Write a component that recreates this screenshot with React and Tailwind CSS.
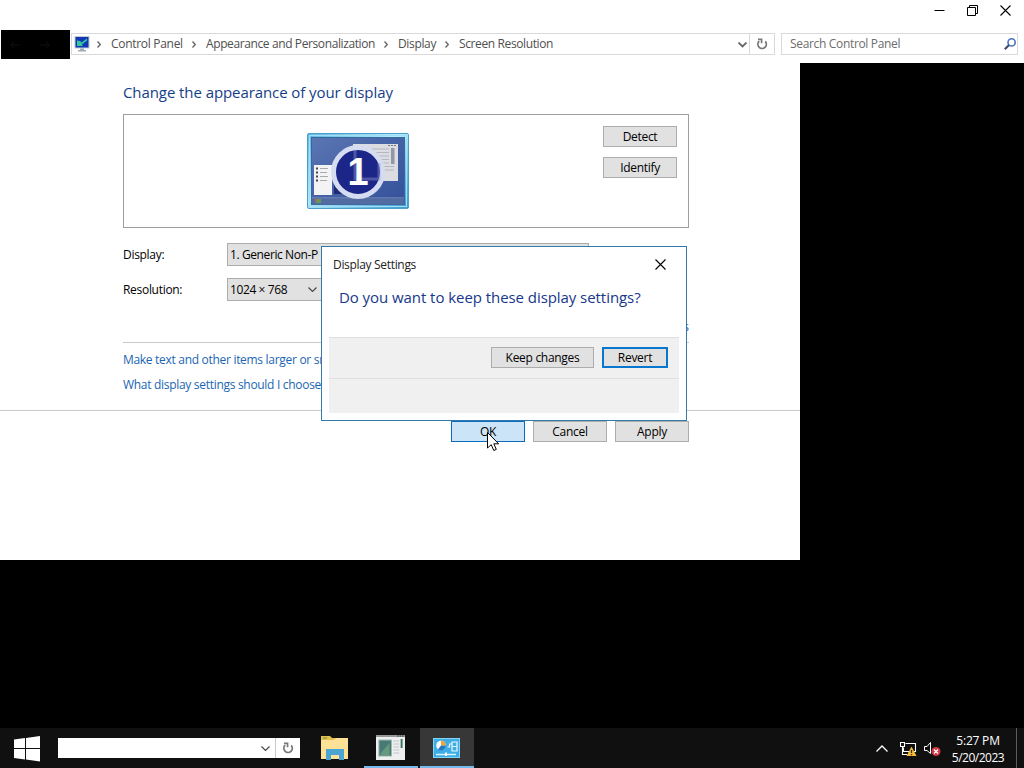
import React from 'react'

const crumbs = [
    { label: 'Control Panel', width: 'w-[95px]', tracking: 'tracking-[-0.3px]' },
    { label: 'Appearance and Personalization', width: 'w-[192px]', tracking: 'tracking-[-0.39px]' },
    { label: 'Display', width: 'w-[61px]', tracking: 'tracking-[-0.35px]' },
    { label: 'Screen Resolution', width: 'w-[100px]', tracking: 'tracking-[-0.38px]' },
]

function Chevron({ className, d = 'M0.5 0.5 L4.5 4.5 L8.5 0.5', box = '0 0 9 5', stroke = '#666', strokeWidth = 1.3 }) {
    return (
        <svg className={className} viewBox={box} fill="none" stroke={stroke} strokeWidth={strokeWidth}>
            <path d={d} />
        </svg>
    )
}

function RefreshIcon() {
    return (
        <svg className="w-3 h-3" viewBox="0 0 12 12" fill="none" stroke="#777" strokeWidth="1.8">
            <path d="M9.2 3.4 A4.2 4.2 0 1 1 3.2 3.2" />
            <path d="M2 1.4 H5.6 V5.2" strokeWidth="1.6" />
        </svg>
    )
}

function CloseIcon() {
    return (
        <svg className="w-[11px] h-[11px]" viewBox="0 0 11 11" stroke="#000" strokeWidth="1.1">
            <path d="M0.5 0.5 L10.5 10.5 M10.5 0.5 L0.5 10.5" />
        </svg>
    )
}

function PushButton({ children, className = 'w-[74px] border border-[#adadad] bg-[#e1e1e1]' }) {
    return (
        <button className={`h-[21px] flex items-center justify-center tracking-[-0.3px] shrink-0 ${className}`}>
            {children}
        </button>
    )
}

function TitleBar() {
    return (
        <div className="h-[30px] flex justify-end pt-[5px] pr-[13px] gap-[22px]">
            <svg className="w-[11px] h-[11px]" viewBox="0 0 11 11" stroke="#000"><path d="M0.5 5.5 H10.5" /></svg>
            <svg className="w-[11px] h-[11px]" viewBox="0 0 11 11" fill="none" stroke="#000">
                <path d="M0.5 2.5 H8.5 V10.5 H0.5 Z M2.5 2.5 V0.5 H10.5 V8.5 H8.5" />
            </svg>
            <CloseIcon />
        </div>
    )
}

function AddressBar() {
    return (
        <div className="h-[33px] flex items-start text-[#4f4f4f]">
            <div className="ml-px w-[69px] h-[29px] bg-black flex items-center pl-[9px] gap-[20px]">
                <svg className="w-[10px] h-[8px]" viewBox="0 0 10 8" fill="none" stroke="#101010"><path d="M4 0.5 L1 4 L4 7.5 M1 4 H10" /></svg>
                <svg className="w-[10px] h-[8px]" viewBox="0 0 10 8" fill="none" stroke="#101010"><path d="M6 0.5 L9 4 L6 7.5 M9 4 H0" /></svg>
            </div>
            <div className="mt-[3px] ml-px w-[704px] h-[22px] border border-[#d9d9d9] flex items-center">
                <svg className="w-4 h-4 ml-[2px] shrink-0" viewBox="0 0 16 16">
                    <path d="M0.5 0 H15.5 V12.5 H0.5 Z" fill="#c5cad4" />
                    <path d="M1.5 1 H14.5 V11.5 H1.5 Z" fill="#1239b4" />
                    <path d="M6 12.5 H10 V14 H12 V15.5 H4 V14 H6 Z" fill="#a3a9b3" />
                    <path d="M13 2.5 L7.5 6.5 L6 5 L3 4.5 V10 H9 L7.8 8.4 L13 4.5 Z" fill="#35c79a" />
                </svg>
                <div className="flex ml-[7px]">
                    {crumbs.map((crumb) => (
                        <div key={crumb.label} className={`flex items-center shrink-0 ${crumb.width}`}>
                            <Chevron className="w-[4px] h-[7px] mr-[10px] shrink-0" box="0 0 4 7" d="M0.5 0.5 L3.3 3.5 L0.5 6.5" strokeWidth={1.4} />
                            <span className={`whitespace-nowrap ${crumb.tracking}`}>{crumb.label}</span>
                        </div>
                    ))}
                </div>
                <Chevron className="w-[9px] h-[6px] ml-auto mr-[2px] shrink-0 mt-[2px]" box="0 0 9 6" strokeWidth={1.8} />
                <div className="w-[25px] h-full border-l border-[#d9d9d9] flex items-center justify-center">
                    <RefreshIcon />
                </div>
            </div>
            <div className="mt-[3px] ml-[6px] w-[237px] h-[22px] border border-[#d9d9d9] flex items-center pl-[8px] text-[#6d6d6d]">
                <span className="tracking-[-0.33px]">Search Control Panel</span>
                <svg className="w-[12px] h-[12px] ml-auto mr-px" viewBox="0 0 12 12" fill="none">
                    <circle cx="7.6" cy="4.4" r="3.6" stroke="#4672bd" strokeWidth="1.6" />
                    <path d="M5 7 L0.8 11.2" stroke="#3a4d6d" strokeWidth="2" />
                </svg>
            </div>
        </div>
    )
}

function MonitorPreview() {
    return (
        <svg className="w-[102px] h-[76px]" viewBox="0 0 102 76">
            <defs>
                <linearGradient id="frame" x1="0" y1="0" x2="1" y2="1">
                    <stop offset="0" stopColor="#5fb6e0" />
                    <stop offset="0.45" stopColor="#b5ebfb" />
                    <stop offset="1" stopColor="#3c9bd2" />
                </linearGradient>
                <linearGradient id="desktop" x1="0" y1="0" x2="1" y2="1">
                    <stop offset="0" stopColor="#5b76b2" />
                    <stop offset="0.5" stopColor="#4562a6" />
                    <stop offset="1" stopColor="#35509a" />
                </linearGradient>
            </defs>
            <rect x="0.5" y="0.5" width="101" height="75" rx="1.5" fill="url(#frame)" stroke="#4b9fca" />
            <rect x="2.5" y="2.5" width="97" height="71" fill="none" stroke="#9edff6" />
            <rect x="4.5" y="4.5" width="93" height="67" fill="url(#desktop)" stroke="#36699f" />
            <rect x="46" y="11" width="45" height="37" fill="#dcdde2" />
            <path d="M65 16 H82 M65 19.5 H82 M65 23 H82 M65 26.5 H82 M65 30 H82 M65 33.5 H87 M65 37 H87" stroke="#b4b7bd" />
            <rect x="84" y="15" width="3.5" height="16" fill="#9298a3" />
            <path d="M81 12.5 H90" stroke="#777" strokeDasharray="2 1" />
            <rect x="27" y="32" width="9" height="29" fill="#1d2c75" />
            <rect x="7" y="32" width="18" height="30" fill="#f3f3f5" />
            <path d="M9 35.5 H11 M9 39.5 H11 M9 43.5 H11 M9 47.5 H11" stroke="#43464d" strokeWidth="1.8" />
            <path d="M13 35.5 H21 M13 39.5 H20 M13 43.5 H21 M13 47.5 H20" stroke="#aaa" />
            <path d="M5 65 H97" stroke="#8498c2" />
            <rect x="5" y="65.5" width="92" height="6" fill="#526ba1" />
            <path d="M8 66 H11 V68 H8 Z" fill="#b66b4e" />
            <path d="M11 66 H14 V70 H9 V68 H11 Z" fill="#5f9c5a" />
            <circle cx="51" cy="39" r="24.5" fill="#1c2689" stroke="#d5dcf2" strokeWidth="5" />
            <path d="M48 17 V46 H72 V30" fill="none" stroke="#8b93c7" strokeWidth="3" opacity="0.45" />
            <text x="51" y="52" textAnchor="middle" fill="#fff" fontFamily="Liberation Sans, sans-serif" fontWeight="700" fontSize="38">1</text>
        </svg>
    )
}

function SettingRow({ label, value, width }) {
    return (
        <div className="flex items-center h-[23px]">
            <span className="w-[104px] tracking-[-0.3px]">{label}</span>
            <div className={`h-[23px] bg-[#e1e1e1] border border-[#adadad] flex items-center justify-between pl-[2px] pr-[6px] ${width}`}>
                <span className="tracking-[-0.4px]">{value}</span>
                <Chevron className="w-[9px] h-[5px]" stroke="#444" strokeWidth={1.1} />
            </div>
        </div>
    )
}

function DisplayPanel() {
    return (
        <div className="w-[800px] h-[497px] bg-white">
            <div className="h-[347px] pl-[123px] pt-[17px]">
                <h1 className="h-[34px] text-[15px] leading-6 text-[#153e89] tracking-[-0.08px]">Change the appearance of your display</h1>
                <div className="w-[566px] h-[114px] border border-[#9e9e9e] flex">
                    <div className="flex-1 pl-[183px] pt-[18px]"><MonitorPreview /></div>
                    <div className="flex flex-col gap-[10px] pt-[11px] pr-[11px]">
                        <PushButton>Detect</PushButton>
                        <PushButton>Identify</PushButton>
                    </div>
                </div>
                <div className="pt-[15px] flex flex-col gap-[12px]">
                    <SettingRow label="Display:" value="1. Generic Non-P" width="w-[362px]" />
                    <SettingRow label="Resolution:" value="1024 × 768" width="w-[97px]" />
                </div>
                <div className="w-[566px] h-[42px] border-b border-[#c9c9c9] flex justify-end items-end pb-[7px] text-[#1a66b3]">Advanced settings</div>
                <div className="pt-[8px] flex flex-col gap-[7px] text-[#1a66b3] leading-[18px] tracking-[-0.3px]">
                    <span>Make text and other items larger or smaller</span>
                    <span>What display settings should I choose?</span>
                </div>
            </div>
            <div className="w-[800px] border-t border-[#c9c9c9] pt-[10px] flex pl-[451px] gap-[8px]">
                <PushButton className="w-[74px] border border-[#0b6cbd] bg-[#cce4f7]">OK</PushButton>
                <PushButton>Cancel</PushButton>
                <PushButton>Apply</PushButton>
            </div>
        </div>
    )
}

function KeepDialog() {
    return (
        <div className="absolute left-[321px] top-[246px] w-[366px] h-[175px] bg-white border border-[#3379ac] px-[7px]">
            <div className="h-[34px] flex items-center justify-between pl-[4px] pr-[13px] pt-[1px] text-[#222]">
                <span className="tracking-[-0.32px]">Display Settings</span>
                <CloseIcon />
            </div>
            <p className="h-[56px] pl-[10px] pt-[4px] text-[15px] leading-6 text-[#16378b] tracking-[-0.06px]">Do you want to keep these display settings?</p>
            <div className="w-[350px] h-[41px] bg-[#f0f0f0] border-t border-[#dfdfdf] flex justify-end gap-[8px] pt-[9px] pr-[11px]">
                <PushButton className="w-[103px] border border-[#adadad] bg-[#e1e1e1]">Keep changes</PushButton>
                <PushButton className="w-[66px] border-2 border-[#0877d0] bg-[#e1e1e1]">Revert</PushButton>
            </div>
            <div className="w-[350px] h-[35px] bg-[#f0f0f0] border-t border-[#dfdfdf]" />
        </div>
    )
}

function Taskbar() {
    return (
        <div className="mt-auto h-10 bg-[#101010] flex items-center text-white">
            <svg className="ml-[14px] mt-[2px] w-[26px] h-[26px]" viewBox="0 0 26 26" fill="#fff">
                <path d="M0 3.6 L11 2.1 V12 H0 Z M12 2 L26 0 V12 H12 Z M0 13 H11 V23.4 L0 22 Z M12 13 H26 V25.5 L12 23.5 Z" />
            </svg>
            <div className="ml-[18px] w-[242px] h-[20px] bg-white flex items-center justify-end">
                <Chevron className="w-[9px] h-[5px] mr-[5px] mt-px" stroke="#444" strokeWidth={1.1} />
                <div className="w-[25px] h-full border-l border-[#ccc] flex items-center justify-center"><RefreshIcon /></div>
            </div>
            <svg className="ml-[21px] w-[28px] h-[24px]" viewBox="0 0 28 24">
                <path d="M0 0 H9 L11 2 H23 V5 H0 Z" fill="#e3c04d" />
                <path d="M0 4 H13 L15 2 H27 V23 H0 Z" fill="#fce197" />
                <path d="M2 2 H6" stroke="#5f9356" />
                <path d="M5 13 H23 V24 H18 V19 H10 V24 H5 Z" fill="#4aa5d3" />
            </svg>
            <div className="ml-[15px] w-[54px] h-10 border-b-2 border-[#76b9ed] flex items-center justify-center">
                <svg className="w-[29px] h-[25px] mr-px" viewBox="0 0 30 25" preserveAspectRatio="none">
                    <rect width="30" height="25" fill="#eef0f0" />
                    <path d="M0 1 H30" stroke="#96999c" strokeWidth="2" />
                    <path d="M22 1 H29" stroke="#333" strokeDasharray="1.5 1" />
                    <rect x="3" y="5" width="13" height="16" fill="#467a73" stroke="#a2b5b3" />
                    <path d="M5 18 L14 8 V20 H5 Z" fill="#649a7e" />
                    <path d="M18 6 H24 M18 9 H24 M18 12 H24 M18 15 H24 M18 18 H24" stroke="#bfc6c6" />
                    <rect x="25.5" y="4" width="2" height="9" fill="#397166" />
                </svg>
            </div>
            <div className="ml-[2px] w-[54px] h-10 bg-[#373737] border-b-2 border-[#76b9ed] flex items-center justify-center">
                <svg className="w-[27px] h-[20px] mr-px mt-px" viewBox="0 0 27 20">
                    <rect x="0.5" y="0.5" width="26" height="19" fill="#3caee5" stroke="#83d5f8" />
                    <circle cx="8" cy="7.5" r="4.8" fill="#f2faff" />
                    <path d="M8 7.5 V2.5 A5 5 0 0 1 13 7.5 Z" fill="#efa43b" />
                    <path d="M8 7.5 H13 A5 5 0 0 1 5 11.4 Z" fill="#2379bd" />
                    <path d="M14.5 9 H16.5 V6 H19 M19 4 H24 V13 H19 Z M19 8.5 H24" fill="none" stroke="#e9f8ff" strokeWidth="1.2" />
                    <path d="M3 16.5 H23" stroke="#d9f3ff" strokeWidth="1.5" />
                    <path d="M13 14.5 V18" stroke="#fff" strokeWidth="2" />
                </svg>
            </div>
            <div className="ml-auto flex items-center">
                <Chevron className="w-[12px] h-[7px]" box="0 0 12 7" d="M0.5 6.5 L6 1 L11.5 6.5" stroke="#fff" />
                <svg className="ml-[12px] w-[17px] h-[16px] mt-[4px]" viewBox="0 0 17 16" fill="none">
                    <path d="M5.5 1.5 H15.5 V9.5 H3.5 V5.5 M0.5 0.5 H4.5 V4.5 H0.5 Z M2.5 5 V12.5 H7" stroke="#fff" strokeWidth="1.1" />
                    <path d="M11.5 4.5 L16.5 14 H6.5 Z" fill="#f5bd35" />
                    <path d="M11.5 8 V11 M11.5 12 V13.2" stroke="#382e12" strokeWidth="1.3" />
                </svg>
                <svg className="ml-[7px] w-[17px] h-[16px] mt-[2px]" viewBox="0 0 17 16" fill="none">
                    <path d="M0.5 5.5 H3 L6.5 1.5 V12.5 L3 9.5 H0.5 Z" stroke="#fff" />
                    <circle cx="12" cy="10.5" r="4.5" fill="#d23747" />
                    <path d="M10 8.5 L14 12.5 M14 8.5 L10 12.5" stroke="#fff" strokeWidth="1.2" />
                </svg>
                <div className="ml-[7px] w-[60px] text-center leading-[17px] pt-[1px]">
                    <p className="tracking-[-0.2px]">5:27 PM</p>
                    <p className="tracking-[-0.5px]">5/20/2023</p>
                </div>
                <div className="ml-[8px] mr-[7px] w-px h-10 bg-[#5c5c5c]" />
            </div>
        </div>
    )
}

export default function App() {
    return (
        <div className="relative w-[1024px] h-[768px] overflow-hidden bg-black flex flex-col text-[12px] leading-4 text-black font-['Open_Sans',sans-serif]">
            <div className="h-[63px] bg-white">
                <TitleBar />
                <AddressBar />
            </div>
            <DisplayPanel />
            <Taskbar />
            <KeepDialog />
            {/* mouse pointer */}
            <svg className="absolute left-[487px] top-[432px] w-[13px] h-[20px]" viewBox="0 0 13 20">
                <path d="M0.5 0.5 V16 L4.2 12.7 L6.8 18.5 L9.3 17.4 L6.8 11.8 H11.7 Z" fill="#fff" stroke="#000" />
            </svg>
        </div>
    )
}
